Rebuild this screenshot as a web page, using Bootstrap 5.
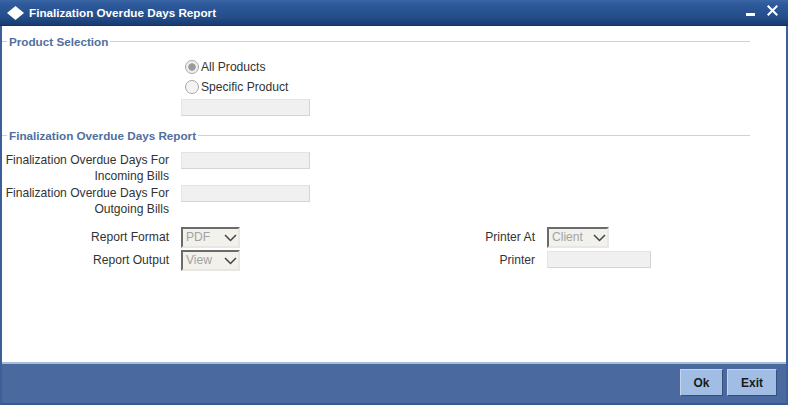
<!DOCTYPE html>
<html lang="en">
<head>
<meta charset="utf-8">
<title>Finalization Overdue Days Report</title>
<link rel="stylesheet" href="https://cdn.jsdelivr.net/npm/bootstrap@5.3.0/dist/css/bootstrap.min.css">
<style>
html,body{height:405px;overflow:hidden;background:#fff}
body{font-family:"Liberation Sans",Arial,sans-serif;font-size:12.1px;color:#333}
.win{width:788px;height:405px;border-left:2px solid #3c5f99;border-right:2px solid #3c5f99;border-bottom:2px solid #38598f}
.titlebar{height:26px;margin:0 -2px;padding:0 0 0 7px;gap:5px;background:linear-gradient(#3b66a5 0,#2f5a9c 15%,#234c88 70%,#183a70 100%);border-bottom:1px solid #14305f;color:#fff;font-weight:700;font-size:11.7px}
.winctl{margin-left:auto;gap:12px;padding:5px 10px 0 0;align-self:flex-start}
.minglyph{margin-top:8px}
.pane{height:336px}
.legendrow{height:15px;color:#4f6f9f;font-weight:700;font-size:11.7px;line-height:15px;gap:2px;white-space:nowrap;margin-right:36px}
.legendrow::before{content:"";width:5px;height:1px;background:#c9d3e0;flex:none}
.legendrow::after{content:"";flex:1 1 auto;height:1px;background:#c9d3e0}
.sec1{margin-top:8px}
.sec2{margin-top:12px}
.radiogrid{margin:8px 0 0 183px}
.radiorow{height:20px;gap:2px}
.rad{width:14px;height:14px;border-radius:50%;border:1px solid #a8a8a8;background:#f4f4f4;flex:none}
.rad.on{background:radial-gradient(circle,#9a9a9a 0 3.400px,#efefef 4px)}
.fieldbox{height:17px;width:129px;background:#f0f0f0;border:1px solid #e4e4e4;border-bottom-color:#d4d4d4;border-right-color:#d4d4d4}
.radiofield{margin:2px 0 0 -4px}
.billblock{margin-top:7px;line-height:16px}
.lbl{width:167px;text-align:right;flex:none}
.val{margin-left:12px}
.billrow{height:33px}
.billrow .fieldbox{margin-top:2px}
.billrow .lbl{padding-top:2px}
.rowsgap{margin-top:11px}
.sel{height:21px;background:#f2f1ec;border:2px solid #e8e7e2;border-top-color:#6b6b6b;border-left-color:#6b6b6b;color:#a3a3a3;padding-left:3px;line-height:17px}
.sel svg{margin-left:auto;margin-right:1px}
.s1{width:59px}
.s2{width:62px}
.rptrow{height:21px;margin-bottom:2px}
.rptrow .lbl{line-height:21px}
.pleft{width:289px;flex:none}
.rightlbl{width:244px;text-align:right;flex:none;line-height:21px}
.pbox{width:104px;margin-top:1px}
.footerbar{margin:0;background:#4a6a9f;border-top:2px solid #a9bcdc;padding:5px 9px 0 0;gap:4px}
.actbtn{width:43px;height:27px;padding:0;border-radius:0;background:#a2bde3;border:1px solid #c3d4ee;border-right-color:#33507f;border-bottom-color:#33507f;font-size:12px;font-weight:700;color:#1a1a1a;font-family:inherit}
.actbtn.wide{width:50px}
</style>
</head>
<body>
<div class="win d-flex flex-column">
  <div class="titlebar d-flex align-items-center">
    <svg width="17" height="14" viewBox="0 0 17 14" class="flex-shrink-0"><path d="M8.500 0 17 7 8.500 14 0 7Z" fill="#fff"/></svg>
    <span>Finalization Overdue Days Report</span>
    <div class="winctl d-flex align-items-start">
      <svg width="9" height="3" viewBox="0 0 9 3" class="minglyph"><rect width="9" height="3" fill="#fff"/></svg>
      <svg width="11" height="11" viewBox="0 0 11 11"><path d="M.7.7 10.300 10.300M10.300.7.7 10.300" stroke="#fff" stroke-width="2"/></svg>
    </div>
  </div>
  <div class="pane">
    <div class="legendrow d-flex align-items-center sec1"><span>Product Selection</span></div>
    <div class="radiogrid">
      <div class="radiorow d-flex align-items-center"><span class="rad on"></span><span>All Products</span></div>
      <div class="radiorow d-flex align-items-center"><span class="rad"></span><span>Specific Product</span></div>
      <div class="fieldbox radiofield"></div>
    </div>
    <div class="legendrow d-flex align-items-center sec2"><span>Finalization Overdue Days Report</span></div>
    <div class="billblock">
      <div class="billrow d-flex"><div class="lbl">Finalization Overdue Days For<br>Incoming Bills</div><div class="fieldbox val"></div></div>
      <div class="billrow d-flex"><div class="lbl">Finalization Overdue Days For<br>Outgoing Bills</div><div class="fieldbox val"></div></div>
    </div>
    <div class="rowsgap">
      <div class="rptrow d-flex">
        <div class="pleft d-flex"><div class="lbl">Report Format</div><div class="val sel s1 d-flex align-items-center">PDF<svg width="13" height="8" viewBox="0 0 13 8"><path d="M1 1 6.500 6.500 12 1" fill="none" stroke="#444" stroke-width="1.500"/></svg></div></div>
        <div class="rightlbl">Printer At</div>
        <div class="val sel s2 d-flex align-items-center">Client<svg width="13" height="8" viewBox="0 0 13 8"><path d="M1 1 6.500 6.500 12 1" fill="none" stroke="#444" stroke-width="1.500"/></svg></div>
      </div>
      <div class="rptrow d-flex">
        <div class="pleft d-flex"><div class="lbl">Report Output</div><div class="val sel s1 d-flex align-items-center">View<svg width="13" height="8" viewBox="0 0 13 8"><path d="M1 1 6.500 6.500 12 1" fill="none" stroke="#444" stroke-width="1.500"/></svg></div></div>
        <div class="rightlbl">Printer</div>
        <div class="val fieldbox pbox"></div>
      </div>
    </div>
  </div>
  <div class="footerbar d-flex justify-content-end flex-grow-1">
    <button type="button" class="btn actbtn">Ok</button>
    <button type="button" class="btn actbtn wide">Exit</button>
  </div>
</div>
</body>
</html>
